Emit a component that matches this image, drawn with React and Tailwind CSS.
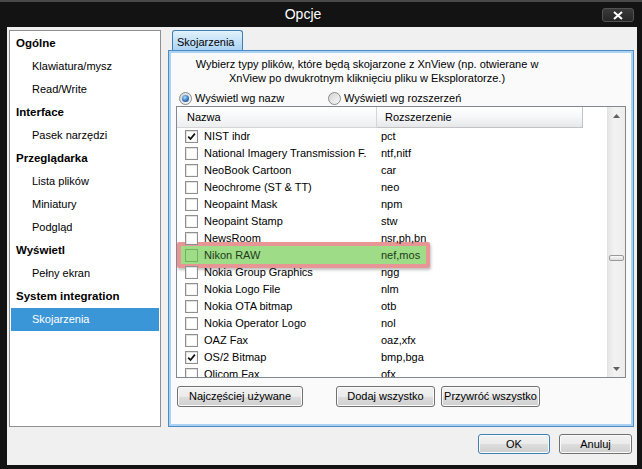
import React from 'react';

const navItems = [
    { label: 'Ogólne', head: true },
    { label: 'Klawiatura/mysz' },
    { label: 'Read/Write' },
    { label: 'Interface', head: true },
    { label: 'Pasek narzędzi' },
    { label: 'Przeglądarka', head: true },
    { label: 'Lista plików' },
    { label: 'Miniatury' },
    { label: 'Podgląd' },
    { label: 'Wyświetl', head: true },
    { label: 'Pełny ekran' },
    { label: 'System integration', head: true },
    { label: 'Skojarzenia', selected: true },
];

const formats = [
    { name: 'NIST ihdr', ext: 'pct', checked: true },
    { name: 'National Imagery Transmission F.', ext: 'ntf,nitf' },
    { name: 'NeoBook Cartoon', ext: 'car' },
    { name: 'Neochrome (ST & TT)', ext: 'neo' },
    { name: 'Neopaint Mask', ext: 'npm' },
    { name: 'Neopaint Stamp', ext: 'stw' },
    { name: 'NewsRoom', ext: 'nsr,ph,bn' },
    { name: 'Nikon RAW', ext: 'nef,mos', marked: true },
    { name: 'Nokia Group Graphics', ext: 'ngg' },
    { name: 'Nokia Logo File', ext: 'nlm' },
    { name: 'Nokia OTA bitmap', ext: 'otb' },
    { name: 'Nokia Operator Logo', ext: 'nol' },
    { name: 'OAZ Fax', ext: 'oaz,xfx' },
    { name: 'OS/2 Bitmap', ext: 'bmp,bga', checked: true },
    { name: 'Olicom Fax', ext: 'ofx' },
];

const Check = ({ checked, marked }) => (
    <span
        className={`w-[13px] h-[13px] shrink-0 border flex items-center justify-center ${
            marked
                ? 'border-[#70b35c] bg-transparent'
                : 'border-[#8f8f8f] bg-white shadow-[inset_1px_1px_0_#e2e2e2,inset_-1px_-1px_0_#f4f4f4]'
        }`}
    >
        {checked && (
            <svg width="9" height="9" viewBox="0 0 9 9">
                <path d="M1.2 4.6 L3.5 7 L7.9 1.6" stroke="#111" strokeWidth="1.7" fill="none" />
            </svg>
        )}
    </span>
);

const Radio = ({ on }) => (
    <span className="w-[13px] h-[13px] shrink-0 rounded-full border border-[#8a8a8a] bg-[linear-gradient(135deg,#d4d4d4,#f8f8f8)] flex items-center justify-center">
        {on && (
            <span className="w-[7px] h-[7px] rounded-full bg-[radial-gradient(circle_at_40%_35%,#a8dcff,#2a6cb8_60%,#184a86)]" />
        )}
    </span>
);

const Btn = ({ children, className = '', def }) => (
    <div
        className={`flex items-center justify-center rounded-[3px] border ${
            def ? 'border-[#3c7fb1]' : 'border-[#707070]'
        } bg-[linear-gradient(#f2f2f2,#ebebeb_50%,#dddddd_51%,#cfcfcf)] shadow-[inset_0_0_0_1px_#fbfbfb] text-[11px] text-black ${className}`}
    >
        {children}
    </div>
);

export default function App() {
    return (
        <div className="w-[642px] h-[469px] bg-[#131313] border-t-2 border-[#4a4a4a] font-[family-name:'Liberation_Sans',Arial,sans-serif] relative overflow-hidden">
            {/* Title bar */}
            <div className="h-[25px] flex items-center justify-center">
                <span className="text-white text-[14px] mr-[36px]">Opcje</span>
            </div>
            <div className="absolute left-[602px] top-[6px] w-[32px] h-[14px] rounded-[3px] border border-[#525252] bg-[linear-gradient(#3a3a3a,#262626)] flex items-center justify-center">
                <svg width="10" height="9" viewBox="0 0 10 9">
                    <path d="M1 1 L9 8 M9 1 L1 8" stroke="#fff" strokeWidth="2" />
                </svg>
            </div>

            {/* Body */}
            <div className="ml-[7px] w-[630px] h-[438px] bg-[#f0f0f0] pt-[3px] pl-[2px]">
                <div className="flex gap-[7px] h-[397px]">
                    {/* Left navigation */}
                    <div className="w-[152px] h-full bg-white border border-[#8e8f8f] pt-[1px] pl-[1px] pr-[1px]">
                        {navItems.map((item) => (
                            <div
                                key={item.label}
                                className={`h-[23px] flex items-center ${
                                    item.head
                                        ? 'pl-[5px] font-bold text-[11.5px] text-black'
                                        : item.selected
                                        ? 'pl-[21px] text-[11px] bg-[#3a96d6] text-white'
                                        : 'pl-[21px] text-[11px] text-black'
                                }`}
                            >
                                {item.label}
                            </div>
                        ))}
                    </div>

                    {/* Tab area */}
                    <div className="w-[466px] h-full flex flex-col">
                        <div className="h-[20px] flex pl-[4px]">
                            <div className="w-[71px] h-[21px] rounded-t-[3px] border border-b-0 border-[#3c7fb1] bg-[linear-gradient(#e2f1fc,#c4e1f8_50%,#a9d2f3)] text-[11px] pl-[4px] pt-[3px] text-black">
                                Skojarzenia
                            </div>
                        </div>
                        <div className="flex-1 border border-[#4d8bc6] shadow-[inset_0_0_0_2px_#acd2f2] bg-[#fafafa] px-[7px] pt-[6px]">
                            <div className="w-[380px] text-center text-[11px] leading-[14px] text-black ml-[1px]">
                                Wybierz typy plików, które będą skojarzone z XnView (np. otwierane w XnView po dwukrotnym kliknięciu pliku w Eksploratorze.)
                            </div>

                            <div className="flex items-center h-[13px] mt-[7px] text-[11px] text-black">
                                <div className="flex items-center gap-[3px] pl-[3px] w-[152px]">
                                    <Radio on />
                                    <span>Wyświetl wg nazw</span>
                                </div>
                                <div className="flex items-center gap-[3px]">
                                    <Radio />
                                    <span>Wyświetl wg rozszerzeń</span>
                                </div>
                            </div>

                            {/* List */}
                            <div className="mt-[1px] h-[272px] border border-[#828790] bg-white flex overflow-hidden">
                                <div className="flex-1 flex flex-col">
                                    <div className="h-[21px] shrink-0 flex text-[11px] text-black">
                                        <div className="w-[200px] h-full flex items-center pl-[10px] border-r border-b border-[#d5d5d5] bg-[linear-gradient(#ffffff,#f6f7f8_50%,#eceef0)]">
                                            Nazwa
                                        </div>
                                        <div className="w-[206px] h-full flex items-center pl-[8px] border-r border-b border-[#c3c3c3] bg-[linear-gradient(#ffffff,#f6f7f8_50%,#e6e7e9)]">
                                            Rozszerzenie
                                        </div>
                                    </div>
                                    <div className="relative flex-1 overflow-hidden">
                                        <div className="absolute left-0 top-[114px] w-[253px] h-[26px] rounded-[2px] border-[4px] border-[#e79595] bg-[#9fdc87] shadow-[1px_2px_3px_rgba(0,0,0,0.25)]" />
                                        {formats.map((f) => (
                                            <div
                                                key={f.name}
                                                className={`relative h-[17px] flex items-center text-[11px] ${
                                                    f.marked ? 'text-[#1d3a1a]' : 'text-black'
                                                }`}
                                            >
                                                <div className="w-[200px] flex items-center gap-[6px] pl-[8px]">
                                                    <Check checked={f.checked} marked={f.marked} />
                                                    <span className="whitespace-nowrap">{f.name}</span>
                                                </div>
                                                <div className="pl-[4px] whitespace-nowrap">{f.ext}</div>
                                            </div>
                                        ))}
                                    </div>
                                </div>

                                {/* Scrollbar */}
                                <div className="w-[18px] h-full bg-[linear-gradient(90deg,#e6e6e6,#f3f3f3_40%,#ececec)] border-l border-[#e2e2e2] flex flex-col items-center">
                                    <div className="h-[17px] flex items-center justify-center">
                                        <svg width="7" height="4" viewBox="0 0 7 4">
                                            <path d="M0 4 L3.5 0 L7 4 Z" fill="#606060" />
                                        </svg>
                                    </div>
                                    <div className="flex-1 w-full px-[1px]">
                                        <div className="mt-[131px] h-[6px] rounded-[2px] border border-[#9a9a9a] bg-[linear-gradient(#fafafa,#dcdcdc)]" />
                                    </div>
                                    <div className="h-[17px] flex items-center justify-center">
                                        <svg width="7" height="4" viewBox="0 0 7 4">
                                            <path d="M0 0 L7 0 L3.5 4 Z" fill="#606060" />
                                        </svg>
                                    </div>
                                </div>
                            </div>

                            <div className="flex mt-[8px] pl-[1px]">
                                <Btn className="w-[126px] h-[21px]">Najczęściej używane</Btn>
                                <Btn className="w-[99px] h-[21px] ml-[33px]">Dodaj wszystko</Btn>
                                <Btn className="w-[99px] h-[21px] ml-[6px]">Przywróć wszystko</Btn>
                            </div>
                        </div>
                    </div>
                </div>

                {/* Dialog buttons */}
                <div className="flex justify-end gap-[9px] mt-[7px] pr-[5px]">
                    <Btn def className="w-[72px] h-[20px]">OK</Btn>
                    <Btn className="w-[73px] h-[20px]">Anuluj</Btn>
                </div>
            </div>
        </div>
    );
}
